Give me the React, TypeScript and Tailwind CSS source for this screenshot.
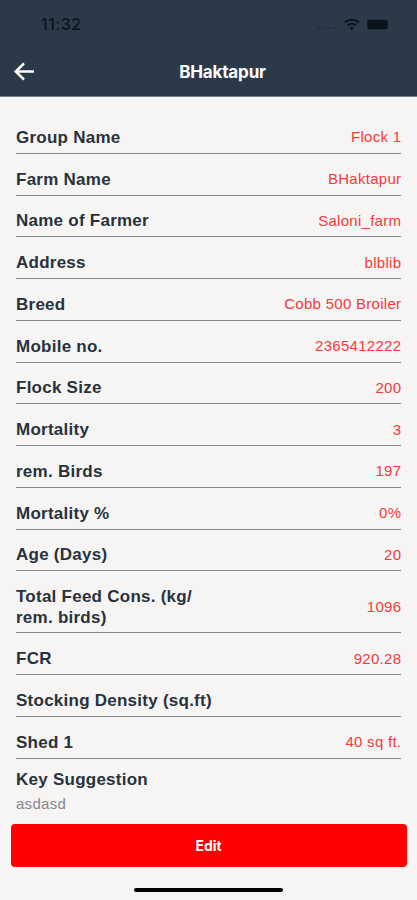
const rows = [
  { label: "Group Name", value: "Flock 1" },
  { label: "Farm Name", value: "BHaktapur" },
  { label: "Name of Farmer", value: "Saloni_farm" },
  { label: "Address", value: "blblib" },
  { label: "Breed", value: "Cobb 500 Broiler" },
  { label: "Mobile no.", value: "2365412222" },
  { label: "Flock Size", value: "200" },
  { label: "Mortality", value: "3" },
  { label: "rem. Birds", value: "197" },
  { label: "Mortality %", value: "0%" },
  { label: "Age (Days)", value: "20" },
  { label: "Total Feed Cons. (kg/\nrem. birds)", value: "1096", tall: true },
  { label: "FCR", value: "920.28" },
  { label: "Stocking Density (sq.ft)", value: "" },
  { label: "Shed 1", value: "40 sq ft." },
];

const InfoRow = ({ label, value, tall }: { label: string; value: string; tall?: boolean }) => (
  <li className={`flex items-center justify-between border-b border-[#858585] pt-[11px] ${tall ? "h-[62px]" : "h-[41.75px]"}`}>
    <span className="mt-[0.5px] text-[17px] leading-[20.5px] font-bold tracking-[0.25px] whitespace-pre-line text-[#28323d]">{label}</span>
    <span className="-mr-[0.3px] mb-px text-[15px] leading-5 tracking-[0.28px] text-[#f53a3a]">{value}</span>
  </li>
);

const StatusBar = () => (
  <div className="flex h-[47px] items-center justify-between pl-[41px] pr-[26px] text-[#0b141d]">
    <span className="font-['Inter',sans-serif] text-[16px] font-medium tracking-[0.5px]">11:32</span>
    <svg width="74" height="16" viewBox="0 0 74 16" fill="currentColor">
      <g opacity=".3">
        <rect x="1" y="11.500" width="3" height="1.500" />
        <rect x="6" y="11.500" width="3" height="1.500" />
        <rect x="11" y="11.500" width="3" height="1.500" />
        <rect x="16" y="11.500" width="3" height="1.500" />
      </g>
      <g fill="none" stroke="currentColor" strokeWidth="2.1">
        <path d="M27.700 6.500c3.700-3.700 10.300-3.700 14 0" />
        <path d="M30.500 9.400c2.300-2.300 6.100-2.300 8.400 0" />
      </g>
      <path d="M32.400 11.700c1.300-1.300 3.300-1.300 4.600 0L34.700 14z" />
      <rect x="50.300" y="3.800" width="20.400" height="9.400" rx="1.500" />
      <path d="M72 6.800c1.200.5 1.200 2.600 0 3.100z" opacity=".5" />
    </svg>
  </div>
);

export default function App() {
  return (
    <div className="flex h-[900px] w-[417px] flex-col overflow-hidden bg-[#f6f5f4] font-['Liberation_Sans',Arial,sans-serif]">
      <header className="h-[97px] border-b border-[#75808a] bg-[#2b3a49]">
        <StatusBar />
        <div className="grid h-[50px] grid-cols-[56px_1fr_28px] items-center text-white">
          <button className="pl-[13px]" aria-label="Back">
            <svg width="22" height="22" viewBox="0 0 22 22" fill="none" stroke="currentColor" strokeWidth="2.6">
              <path d="M21 10.500H3M11 2.300 2.800 10.500l8.200 8.200" />
            </svg>
          </button>
          <h1 className="pt-0.5 text-center font-['Inter',sans-serif] text-[17px] font-bold tracking-[-0.15px]">BHaktapur</h1>
        </div>
      </header>

      <ul className="mx-4 mt-[15px]">
        {rows.map((row) => (
          <InfoRow key={row.label} {...row} />
        ))}
      </ul>

      <div className="px-4 pt-[11px]">
        <h2 className="text-[17px] leading-5 font-bold tracking-[0.25px] text-[#28323d]">Key Suggestion</h2>
        <p className="mt-1 text-[15px] leading-5 tracking-[0.28px] text-[#85878f]">asdasd</p>
      </div>

      <button className="mx-[10.5px] mt-[10px] h-[43px] shrink-0 rounded bg-[#ff0000] font-['Inter',sans-serif] text-[14px] font-bold text-white">
        Edit
      </button>
      <div className="mx-auto mt-[21px] h-1 w-[149px] shrink-0 rounded-full bg-black" />
    </div>
  );
}
